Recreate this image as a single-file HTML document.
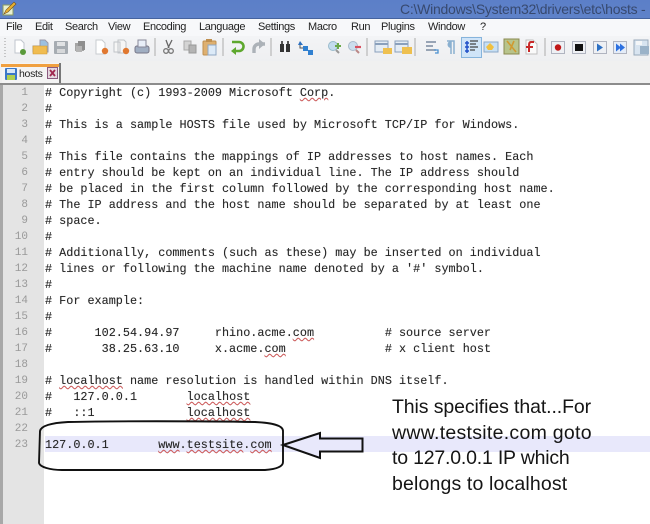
<!DOCTYPE html>
<html>
<head>
<meta charset="utf-8">
<style>
html,body{margin:0;padding:0;background:#fff}
#p{position:relative;width:650px;height:524px;overflow:hidden;background:#fff;font-family:"Liberation Sans",sans-serif;filter:blur(.35px)}
#p div{position:absolute}
.l{left:45px;font:11.8px/16px "Liberation Mono",monospace;color:#262626;white-space:pre;text-shadow:0 0 .5px rgba(40,40,40,.5)}
.n{left:3px;width:25px;text-align:right;font:11px/16px "Liberation Mono",monospace;color:#999}
u{text-decoration:underline wavy #d86060 1px;text-underline-offset:1px}
.m{top:20px;font-size:11px;line-height:15px;color:#222;letter-spacing:-.35px}
.a{left:392px;font-size:19.5px;line-height:26px;color:#151515;white-space:pre}
</style>
</head>
<body>
<div id="p">
<div style="left:0;top:0;width:650px;height:18px;background:linear-gradient(#5c7fc8,#5f82c9)"></div>
<div style="left:0;top:18px;width:650px;height:1px;background:#45639f"></div>
<svg style="position:absolute;left:2px;top:1px" width="15" height="15" viewBox="0 0 15 15"><path d="M1 4h10v10H1z" fill="#e8f0d0" stroke="#8a9a60"/><path d="M2 13L4 9 12 1l2 2-8 8z" fill="#e8b030" stroke="#705020" stroke-width=".6"/></svg>
<div style="left:400px;top:1px;font-size:14px;line-height:17px;letter-spacing:-.25px;color:#37496f;white-space:pre">C:\Windows\System32\drivers\etc\hosts - N</div>
<div style="left:0;top:19px;width:650px;height:17px;background:#f7f8fa"></div>
<div class="m" style="left:6px">File</div>
<div class="m" style="left:35px">Edit</div>
<div class="m" style="left:65px">Search</div>
<div class="m" style="left:108px">View</div>
<div class="m" style="left:143px">Encoding</div>
<div class="m" style="left:199px">Language</div>
<div class="m" style="left:258px">Settings</div>
<div class="m" style="left:308px">Macro</div>
<div class="m" style="left:351px">Run</div>
<div class="m" style="left:381px">Plugins</div>
<div class="m" style="left:428px">Window</div>
<div class="m" style="left:480px">?</div>
<div style="left:0;top:36px;width:650px;height:25px;background:linear-gradient(#f3f4f6,#eeeff1)"></div>
<div style="left:0;top:61px;width:650px;height:22px;background:#f0f0f0"></div>
<svg style="position:absolute;left:0;top:36px" width="650" height="25" viewBox="0 36 650 25">
<path d="M5 38v20" stroke="#999" stroke-dasharray="1 2"/>
<g stroke="#c0c0c0" stroke-width="1.4"><path d="M155 38v18M223 38v18M271 38v18M367 38v18M415 38v18M545 38v18"/></g>
<path d="M15 40h6l3 3v10H15z" fill="#fff" stroke="#c0c6ce"/><circle cx="23" cy="52" r="3" fill="#5a9a3a"/>
<path d="M33 46h7v-6h5l3 3v9H33z" fill="#9cc0e0" stroke="#99a"/><path d="M33 46h14v8H33z" fill="#f0bc50" stroke="#d09830" stroke-width=".6"/>
<rect x="54" y="41" width="14" height="13" rx="1" fill="#a6acb2"/><rect x="57" y="42" width="8" height="4" fill="#e0e2e4"/><rect x="57" y="49" width="8" height="4" fill="#d6d8da"/>
<path d="M75 43h9v8h-9z" fill="#a4a4a4"/><path d="M78 41h7v9h-7z" fill="#8e8e8e"/><rect x="76" y="46" width="6" height="6" fill="#b4b4b4"/>
<path d="M96 40h6l3 3v11H96z" fill="#fff" stroke="#c8ccd0"/><circle cx="105" cy="51" r="3.2" fill="#e07830"/>
<path d="M114 42h6v10h-6zM118 40h6l2 2v11h-8z" fill="#f6f6f6" stroke="#c0c4c8"/><circle cx="126" cy="51" r="3.2" fill="#e07830"/>
<rect x="135" y="46" width="14" height="7" rx="2" fill="#a0aec2" stroke="#778"/><path d="M138 40h8v7h-8z" fill="#e8eef8" stroke="#889"/>
<path d="M166 40l3 8M172 40l-4 8" stroke="#666" stroke-width="1.3" fill="none"/><circle cx="166" cy="51" r="2.3" fill="none" stroke="#777" stroke-width="1.3"/><circle cx="171" cy="51" r="2.3" fill="none" stroke="#777" stroke-width="1.3"/>
<path d="M184 41h7v9h-7z" fill="#d4d4d4" stroke="#aaa"/><path d="M189 45h7v8h-7z" fill="#b4b4b4" stroke="#999"/>
<rect x="203" y="41" width="13" height="14" rx="1" fill="#deb070" stroke="#c09050"/><path d="M208 45h8v10h-8z" fill="#dceaf8" stroke="#90a8c4"/><rect x="206" y="39" width="6" height="3" fill="#c09050"/>
<path d="M232 42h7a4.500 4.500 0 0 1 0 9h-5" fill="none" stroke="#5ea82e" stroke-width="2.6"/><path d="M236 47l-5 4 5 4z" fill="#5ea82e"/>
<path d="M265 44h-6a5 5 0 0 0-5 5v4" fill="none" stroke="#acb2b8" stroke-width="3.400"/><path d="M259 39l6 5-6 5z" fill="#acb2b8"/>
<path d="M280 44h4v8h-4zM286 44h4v8h-4z" fill="#333"/><path d="M281 41h2v3h-2zM287 41h2v3h-2z" fill="#555"/>
<path d="M300 41l3 4h-5z" fill="#2c70c0"/><rect x="303" y="46" width="5" height="5" fill="#3080d0"/><rect x="308" y="50" width="5" height="5" fill="#3080d0"/><path d="M300 45v3h3" stroke="#555" fill="none"/>
<circle cx="333" cy="46" r="4.500" fill="#c4dcee" stroke="#9bc"/><path d="M335 46h6M338 43v6" stroke="#6aa84a" stroke-width="2"/><path d="M336 50l3 3" stroke="#999" stroke-width="2"/>
<circle cx="353" cy="46" r="4.500" fill="#ccdeee" stroke="#abc"/><path d="M355 47h6" stroke="#d85060" stroke-width="2.200"/><path d="M356 50l3 3" stroke="#b88" stroke-width="2"/>
<rect x="375" y="41" width="13" height="11" fill="#e4ecf4" stroke="#8aa0bc"/><path d="M375 44h13" stroke="#8aa0bc" stroke-width="2"/><rect x="383" y="48" width="9" height="6" fill="#eec050"/>
<rect x="395" y="41" width="13" height="11" fill="#e4ecf4" stroke="#8aa0bc"/><path d="M395 44h13" stroke="#8aa0bc" stroke-width="2"/><rect x="402" y="47" width="10" height="7" fill="#eec050"/>
<path d="M426 42h10M426 46h7M426 50h10" stroke="#7a8aa0" stroke-width="1.500"/><path d="M434 50h4v3h-3" stroke="#4a90d0" fill="none" stroke-width="1.300"/>
<path d="M447 41h7v13M451 41v13" fill="none" stroke="#8ab0d0" stroke-width="1.500"/><path d="M451 41a3.500 3.500 0 0 0 0 7z" fill="#8ab0d0"/>
<rect x="461.500" y="37.500" width="20" height="20" fill="#cfe4f8" stroke="#86b4dc"/>
<path d="M467 41v12M465 43h4M465 47h4M465 51h4" stroke="#2050c8" stroke-width="1.500"/><path d="M470 41h8M470 44h6M470 47h8M470 50h5" stroke="#444" stroke-width="1.300"/>
<rect x="484" y="42" width="14" height="10" fill="#c8e0f4" stroke="#8aa8c8"/><path d="M490 43l4 4-2 3h-4l-2-3z" fill="#f0c040"/>
<rect x="504" y="39" width="15" height="15" fill="#b8c48c" stroke="#8a8a50"/><path d="M507 41l9 11M514 41l-4 9" stroke="#d09a30" stroke-width="1.600" fill="none"/>
<path d="M526 40h7l4 4v10H526z" fill="#fafafa" stroke="#c0c0c0"/><path d="M534 42h-3c-2 0-2 2-2 4v6M526 47h7" stroke="#c82828" stroke-width="2" fill="none"/>
<rect x="551.500" y="41.500" width="13" height="12" fill="#eef0f4" stroke="#b0b4c0"/><circle cx="558" cy="47.500" r="3.200" fill="#c01818"/>
<rect x="572.500" y="41.500" width="13" height="12" fill="#eef0f4" stroke="#b0b4c0"/><rect x="575" y="44" width="8" height="7" fill="#111"/>
<rect x="593.500" y="41.500" width="13" height="12" fill="#eef0f4" stroke="#b0b4c0"/><path d="M597 43.500l6 4-6 4z" fill="#2c70c4"/>
<rect x="613.500" y="41.500" width="13" height="12" fill="#e4ecf8" stroke="#b0b4c0"/><path d="M616 43.500l5 4-5 4zM620 43.500l5 4-5 4z" fill="#2c70e0"/>
<rect x="634" y="40" width="14" height="15" fill="#d8e4f0" stroke="#9ab"/><rect x="640" y="46" width="9" height="8" fill="#9ab2c8"/><rect x="636" y="41" width="6" height="4" fill="#f4f6f8"/>
</svg>
<div style="left:2px;top:63px;width:58px;height:20px;background:#f4f4f4"></div>
<div style="left:1px;top:64px;width:59px;height:3px;background:#f0a040"></div>
<div style="left:59px;top:63px;width:2px;height:20px;background:#777"></div>
<svg style="position:absolute;left:5px;top:68px" width="12" height="13" viewBox="0 0 12 13"><rect width="12" height="12" rx="1" fill="#3c78c8"/><rect x="2" y="1" width="8" height="4" fill="#d8e8f8"/><rect x="2" y="7" width="8" height="5" fill="#b0d050"/></svg>
<div style="left:19px;top:67px;font-size:10.5px;line-height:15px;letter-spacing:-.3px;color:#222">hosts</div>
<svg style="position:absolute;left:47px;top:67px" width="11" height="12" viewBox="0 0 11 12"><rect x=".5" y=".5" width="10" height="11" fill="#e4d8e0" stroke="#8a5a80"/><path d="M3 3l5 6M8 3L3 9" stroke="#a02850" stroke-width="1.800"/></svg>
<div style="left:0;top:83px;width:650px;height:2px;background:#8c8c8c"></div>
<div style="left:0;top:85px;width:3px;height:439px;background:#a8a8a8"></div>
<div style="left:3px;top:85px;width:41px;height:439px;background:#e4e4e4"></div>
<div style="left:45px;top:436px;width:605px;height:16px;background:#e8e8fb"></div>
<div class="n" style="top:85px">1</div>
<div class="n" style="top:101px">2</div>
<div class="n" style="top:117px">3</div>
<div class="n" style="top:133px">4</div>
<div class="n" style="top:149px">5</div>
<div class="n" style="top:165px">6</div>
<div class="n" style="top:181px">7</div>
<div class="n" style="top:197px">8</div>
<div class="n" style="top:213px">9</div>
<div class="n" style="top:229px">10</div>
<div class="n" style="top:245px">11</div>
<div class="n" style="top:261px">12</div>
<div class="n" style="top:277px">13</div>
<div class="n" style="top:293px">14</div>
<div class="n" style="top:309px">15</div>
<div class="n" style="top:325px">16</div>
<div class="n" style="top:341px">17</div>
<div class="n" style="top:357px">18</div>
<div class="n" style="top:373px">19</div>
<div class="n" style="top:389px">20</div>
<div class="n" style="top:405px">21</div>
<div class="n" style="top:421px">22</div>
<div class="n" style="top:437px">23</div>
<div class="l" style="top:85px"># Copyright (c) 1993-2009 Microsoft <u>Corp</u>.</div>
<div class="l" style="top:101px">#</div>
<div class="l" style="top:117px"># This is a sample HOSTS file used by Microsoft TCP/IP for Windows.</div>
<div class="l" style="top:133px">#</div>
<div class="l" style="top:149px"># This file contains the mappings of IP addresses to host names. Each</div>
<div class="l" style="top:165px"># entry should be kept on an individual line. The IP address should</div>
<div class="l" style="top:181px"># be placed in the first column followed by the corresponding host name.</div>
<div class="l" style="top:197px"># The IP address and the host name should be separated by at least one</div>
<div class="l" style="top:213px"># space.</div>
<div class="l" style="top:229px">#</div>
<div class="l" style="top:245px"># Additionally, comments (such as these) may be inserted on individual</div>
<div class="l" style="top:261px"># lines or following the machine name denoted by a '#' symbol.</div>
<div class="l" style="top:277px">#</div>
<div class="l" style="top:293px"># For example:</div>
<div class="l" style="top:309px">#</div>
<div class="l" style="top:325px">#      102.54.94.97     rhino.acme.<u>com</u>          # source server</div>
<div class="l" style="top:341px">#       38.25.63.10     x.acme.<u>com</u>              # x client host</div>
<div class="l" style="top:373px"># <u>localhost</u> name resolution is handled within DNS itself.</div>
<div class="l" style="top:389px">#   127.0.0.1       <u>localhost</u></div>
<div class="l" style="top:405px">#   ::1             <u>localhost</u></div>
<div class="l" style="top:437px">127.0.0.1       <u>www</u>.<u>testsite</u>.<u>com</u></div>
<svg style="position:absolute;left:0;top:0" width="650" height="524" viewBox="0 0 650 524">
<path d="M68 422C50 423 41 426 40 431L39 463C40 467 50 470 62 470L265 470C278 469 283 466 283 462L283 431C283 426 275 423 255 422C200 421 110 421 68 422Z" fill="none" stroke="#111" stroke-width="1.900"/>
<path d="M283 445L320 433V438.500H362.500V451.500H320V458Z" fill="#e8e8fb" stroke="#111" stroke-width="2"/>
</svg>
<div class="a" style="top:394px;letter-spacing:-.1px">This specifies that...For</div>
<div class="a" style="top:420px;letter-spacing:.28px">www.testsite.com goto</div>
<div class="a" style="top:445px;letter-spacing:-.2px">to 127.0.0.1 IP which</div>
<div class="a" style="top:471px;letter-spacing:.15px">belongs to localhost</div>
</div>
</body>
</html>
